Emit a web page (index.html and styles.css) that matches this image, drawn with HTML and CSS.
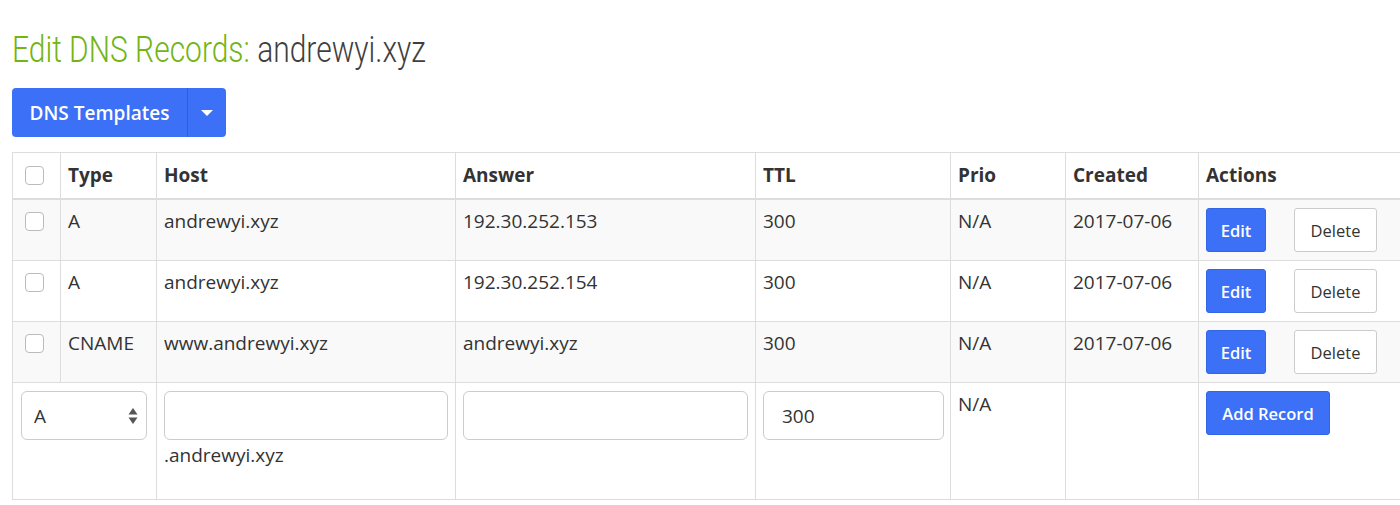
FILE: index.html
```html
<!DOCTYPE html>
<html>
<head>
<meta charset="utf-8">
<link rel="stylesheet" href="styles.css">
</head>
<body>
<div class="page">
  <h1 class="title"><span class="title-inner"><span class="title-lead">Edit DNS Records:</span> <span class="title-domain">andrewyi.xyz</span></span></h1>
  <div class="btn-group">
    <button class="btn-main">DNS Templates</button>
    <button class="btn-caret"><span class="caret"></span></button>
  </div>
  <table class="records">
    <colgroup>
      <col class="c-check"><col class="c-type"><col class="c-host"><col class="c-answer"><col class="c-ttl"><col class="c-prio"><col class="c-created"><col class="c-actions">
    </colgroup>
    <thead>
      <tr>
        <th class="cb-cell"><span class="checkbox"></span></th>
        <th>Type</th><th>Host</th><th>Answer</th><th>TTL</th><th>Prio</th><th>Created</th><th>Actions</th>
      </tr>
    </thead>
    <tbody>
      <tr class="striped">
        <td class="cb-cell"><span class="checkbox"></span></td>
        <td>A</td><td>andrewyi.xyz</td><td>192.30.252.153</td><td>300</td><td>N/A</td><td>2017-07-06</td>
        <td><div class="actions"><button class="btn-edit">Edit</button><button class="btn-delete">Delete</button></div></td>
      </tr>
      <tr>
        <td class="cb-cell"><span class="checkbox"></span></td>
        <td>A</td><td>andrewyi.xyz</td><td>192.30.252.154</td><td>300</td><td>N/A</td><td>2017-07-06</td>
        <td><div class="actions"><button class="btn-edit">Edit</button><button class="btn-delete">Delete</button></div></td>
      </tr>
      <tr class="striped">
        <td class="cb-cell"><span class="checkbox"></span></td>
        <td>CNAME</td><td>www.andrewyi.xyz</td><td>andrewyi.xyz</td><td>300</td><td>N/A</td><td>2017-07-06</td>
        <td><div class="actions"><button class="btn-edit">Edit</button><button class="btn-delete">Delete</button></div></td>
      </tr>
      <tr class="new-row">
        <td colspan="2"><div class="select"><span>A</span><svg class="updown" width="10" height="18" viewBox="0 0 10 18"><path d="M5 1 L9.5 7.5 H0.5 Z M5 17 L9.5 10.5 H0.5 Z" fill="#555"/></svg></div></td>
        <td><div class="input"></div><div class="suffix">.andrewyi.xyz</div></td>
        <td><div class="input"></div></td>
        <td><div class="input ttl"><span>300</span></div></td>
        <td>N/A</td>
        <td></td>
        <td><button class="btn-add">Add Record</button></td>
      </tr>
    </tbody>
  </table>
</div>
</body>
</html>
```

FILE: styles.css
```css
html, body {
  margin: 0;
  padding: 0;
  background: #fff;
  overflow: hidden;
}
body {
  font-family: "Open Sans", "Lato", sans-serif;
  color: #333;
}
.page {
  padding: 30px 0 0 12px;
  width: 1430px;
}
.title {
  margin: 0 0 18px 0;
  font-family: "Roboto", "Liberation Sans", sans-serif;
  font-weight: 300;
  font-size: 37px;
  line-height: 40px;
  white-space: nowrap;
}
.title-inner {
  display: inline-block;
  transform: scaleX(0.81);
  transform-origin: left center;
}
.title-lead { color: #72b514; }
.title-domain { color: #3f3f3f; }

.btn-group {
  display: inline-flex;
  height: 49px;
  border-radius: 4px;
  overflow: hidden;
  margin-bottom: 15px;
}
.btn-group button {
  border: 0;
  background: #3b70f7;
  color: #fff;
  font-family: "Open Sans", sans-serif;
  font-size: 19px;
  font-weight: 600;
  cursor: pointer;
}
.btn-main {
  width: 176px;
  padding: 0;
  border-right: 1px solid #2e5fd8 !important;
}
.btn-caret {
  width: 38px;
  display: flex;
  align-items: center;
  justify-content: center;
}
.caret {
  width: 0; height: 0;
  border-left: 6px solid transparent;
  border-right: 6px solid transparent;
  border-top: 6px solid #fff;
}

.records {
  border-collapse: collapse;
  table-layout: fixed;
  width: 1420px;
  font-size: 19px;
}
.c-check { width: 48px; }
.c-type { width: 96px; }
.c-host { width: 299px; }
.c-answer { width: 300px; }
.c-ttl { width: 195px; }
.c-prio { width: 115px; }
.c-created { width: 133px; }
.c-actions { width: 234px; }

.records th, .records td {
  border: 1px solid #ddd;
  padding: 8px 7px;
  text-align: left;
  vertical-align: top;
  line-height: 26px;
}
.records th {
  font-weight: 700;
  height: 28px;
  padding-top: 9px;
  border-bottom: 2px solid #ddd;
}
.records td { height: 44px; }
.striped td { background: #f9f9f9; }

.cb-cell { text-align: center; }
.records .cb-cell { padding-left: 12px; }
.checkbox {
  display: block;
  width: 17px;
  height: 17px;
  margin-top: 4px;
  border: 1px solid #bbb;
  border-radius: 4px;
  background: #fff;
}

.actions {
  display: flex;
  gap: 28px;
}
.btn-edit, .btn-add {
  height: 44px;
  border: 1px solid #3266e6;
  border-radius: 3px;
  background: #3b70f7;
  color: #fff;
  font-family: "Open Sans", sans-serif;
  font-size: 16.5px;
  font-weight: 600;
  padding: 0;
}
.btn-edit { width: 60px; }
.btn-add { width: 124px; }
.btn-delete {
  width: 83px;
  height: 44px;
  border: 1px solid #ccc;
  border-radius: 3px;
  background: #fff;
  color: #333;
  font-family: "Open Sans", sans-serif;
  font-size: 16.5px;
  padding: 0;
}

.new-row td { height: 100px; background: #fff; }
.select {
  width: 126px;
  height: 49px;
  box-sizing: border-box;
  border: 1px solid #ccc;
  border-radius: 6px;
  display: flex;
  align-items: center;
  justify-content: space-between;
  padding: 0 8px 0 12px;
  font-size: 19px;
  margin-left: 1px;
}
.input {
  height: 49px;
  box-sizing: border-box;
  border: 1px solid #ccc;
  border-radius: 6px;
  width: 100%;
  margin-right: 1px;
  display: flex;
  align-items: center;
  padding-left: 18px;
  font-size: 19px;
}
.input.ttl { width: 181px; }
.suffix {
  margin-top: 2px;
  line-height: 26px;
}
```
